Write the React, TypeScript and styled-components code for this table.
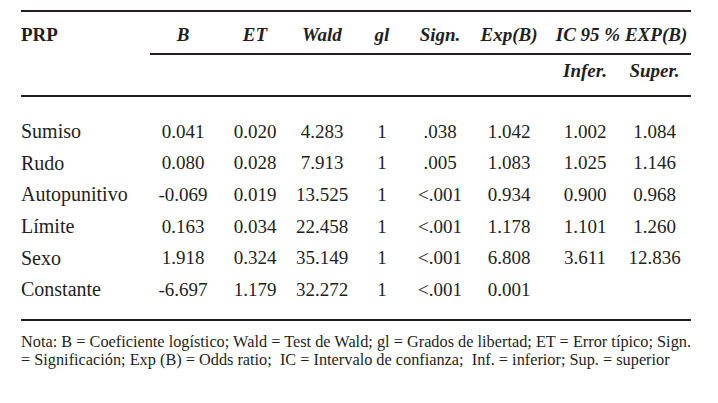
import * as React from 'react';
import styled, { createGlobalStyle } from 'styled-components';

const ink = '#231f20';

const GlobalStyle = createGlobalStyle`
  html, body {
    margin: 0;
    padding: 0;
    background: #ffffff;
  }
  body {
    font-family: "Liberation Serif", "Times New Roman", serif;
    color: ${ink};
  }
`;

const Page = styled.div`
  width: 670px;
  padding: 10px 0 0 21px;
`;

const Table = styled.table`
  width: 670px;
  table-layout: fixed;
  border-collapse: separate;
  border-spacing: 0;
  border-top: 2px solid ${ink};
  font-family: "Liberation Serif", "Times New Roman", serif;
  font-size: 19px;
  color: ${ink};
`;

const Col = styled.col<{ $w: number }>`
  width: ${(p) => p.$w}px;
`;

// header cells: height is border-box so the partial rule doesn't shift rows
const HeadCell = styled.th<{ $rule?: boolean; $left?: boolean; $italic?: boolean; $h: number; $top: number }>`
  box-sizing: border-box;
  height: ${(p) => p.$h}px;
  padding: ${(p) => p.$top}px 0 0 0;
  line-height: 22px;
  font-weight: 700;
  font-style: ${(p) => (p.$italic === false ? 'normal' : 'italic')};
  text-align: ${(p) => (p.$left ? 'left' : 'center')};
  vertical-align: top;
  white-space: nowrap;
  border-bottom: ${(p) => (p.$rule ? `2px solid ${ink}` : 'none')};
`;

const Row = styled.tr`
  height: 31.6px;
`;

const Spacer = styled.tr<{ $h: number }>`
  height: ${(p) => p.$h}px;
`;

const Label = styled.td`
  padding: 0;
  font-size: 20px;
  text-align: left;
  white-space: nowrap;
`;

const Num = styled.td`
  padding: 0;
  text-align: center;
  white-space: nowrap;
`;

const Note = styled.div`
  width: 670px;
  border-top: 2px solid ${ink};
  padding-top: 12px;
  font-size: 16.3px;
  line-height: 18px;
`;

const NoteLine = styled.div<{ $justify?: boolean }>`
  text-align: ${(p) => (p.$justify ? 'justify' : 'left')};
  text-align-last: ${(p) => (p.$justify ? 'justify' : 'left')};
  white-space: ${(p) => (p.$justify ? 'nowrap' : 'pre')};
`;

const widths = [129, 66, 78, 56, 64, 52, 86, 66, 73];

const rows: string[][] = [
  ['Sumiso', '0.041', '0.020', '4.283', '1', '.038', '1.042', '1.002', '1.084'],
  ['Rudo', '0.080', '0.028', '7.913', '1', '.005', '1.083', '1.025', '1.146'],
  ['Autopunitivo', '-0.069', '0.019', '13.525', '1', '<.001', '0.934', '0.900', '0.968'],
  ['Límite', '0.163', '0.034', '22.458', '1', '<.001', '1.178', '1.101', '1.260'],
  ['Sexo', '1.918', '0.324', '35.149', '1', '<.001', '6.808', '3.611', '12.836'],
  ['Constante', '-6.697', '1.179', '32.272', '1', '<.001', '0.001', '', ''],
];

const topHeads = ['B', 'ET', 'Wald', 'gl', 'Sign.', 'Exp(B)'];

const App = () => {
  return (
    <Page>
      <GlobalStyle />
      <Table>
        <colgroup>
          {widths.map((w, i) => (
            <Col key={i} $w={w} />
          ))}
        </colgroup>
        <thead>
          <tr>
            <HeadCell $h={43} $top={12} $left $italic={false}>
              PRP
            </HeadCell>
            {topHeads.map((h) => (
              <HeadCell key={h} $h={43} $top={12} $rule>
                {h}
              </HeadCell>
            ))}
            <HeadCell $h={43} $top={12} $rule colSpan={2}>
              IC 95 % EXP(B)
            </HeadCell>
          </tr>
          <tr>
            <HeadCell $h={42} $top={5} $rule colSpan={7} />
            <HeadCell $h={42} $top={5} $rule>
              Infer.
            </HeadCell>
            <HeadCell $h={42} $top={5} $rule>
              Super.
            </HeadCell>
          </tr>
        </thead>
        <tbody>
          <Spacer $h={19} />
          {rows.map((r) => (
            <Row key={r[0]}>
              <Label>{r[0]}</Label>
              {r.slice(1).map((v, i) => (
                <Num key={i}>{v}</Num>
              ))}
            </Row>
          ))}
          <Spacer $h={13} />
        </tbody>
      </Table>
      <Note>
        <NoteLine $justify>
          Nota: B = Coeficiente logístico; Wald = Test de Wald; gl = Grados de libertad; ET = Error típico; Sign.
        </NoteLine>
        <NoteLine>
          {'= Significación; Exp (B) = Odds ratio;  IC = Intervalo de confianza;  Inf. = inferior; Sup. = superior'}
        </NoteLine>
      </Note>
    </Page>
  );
};

export default App;
